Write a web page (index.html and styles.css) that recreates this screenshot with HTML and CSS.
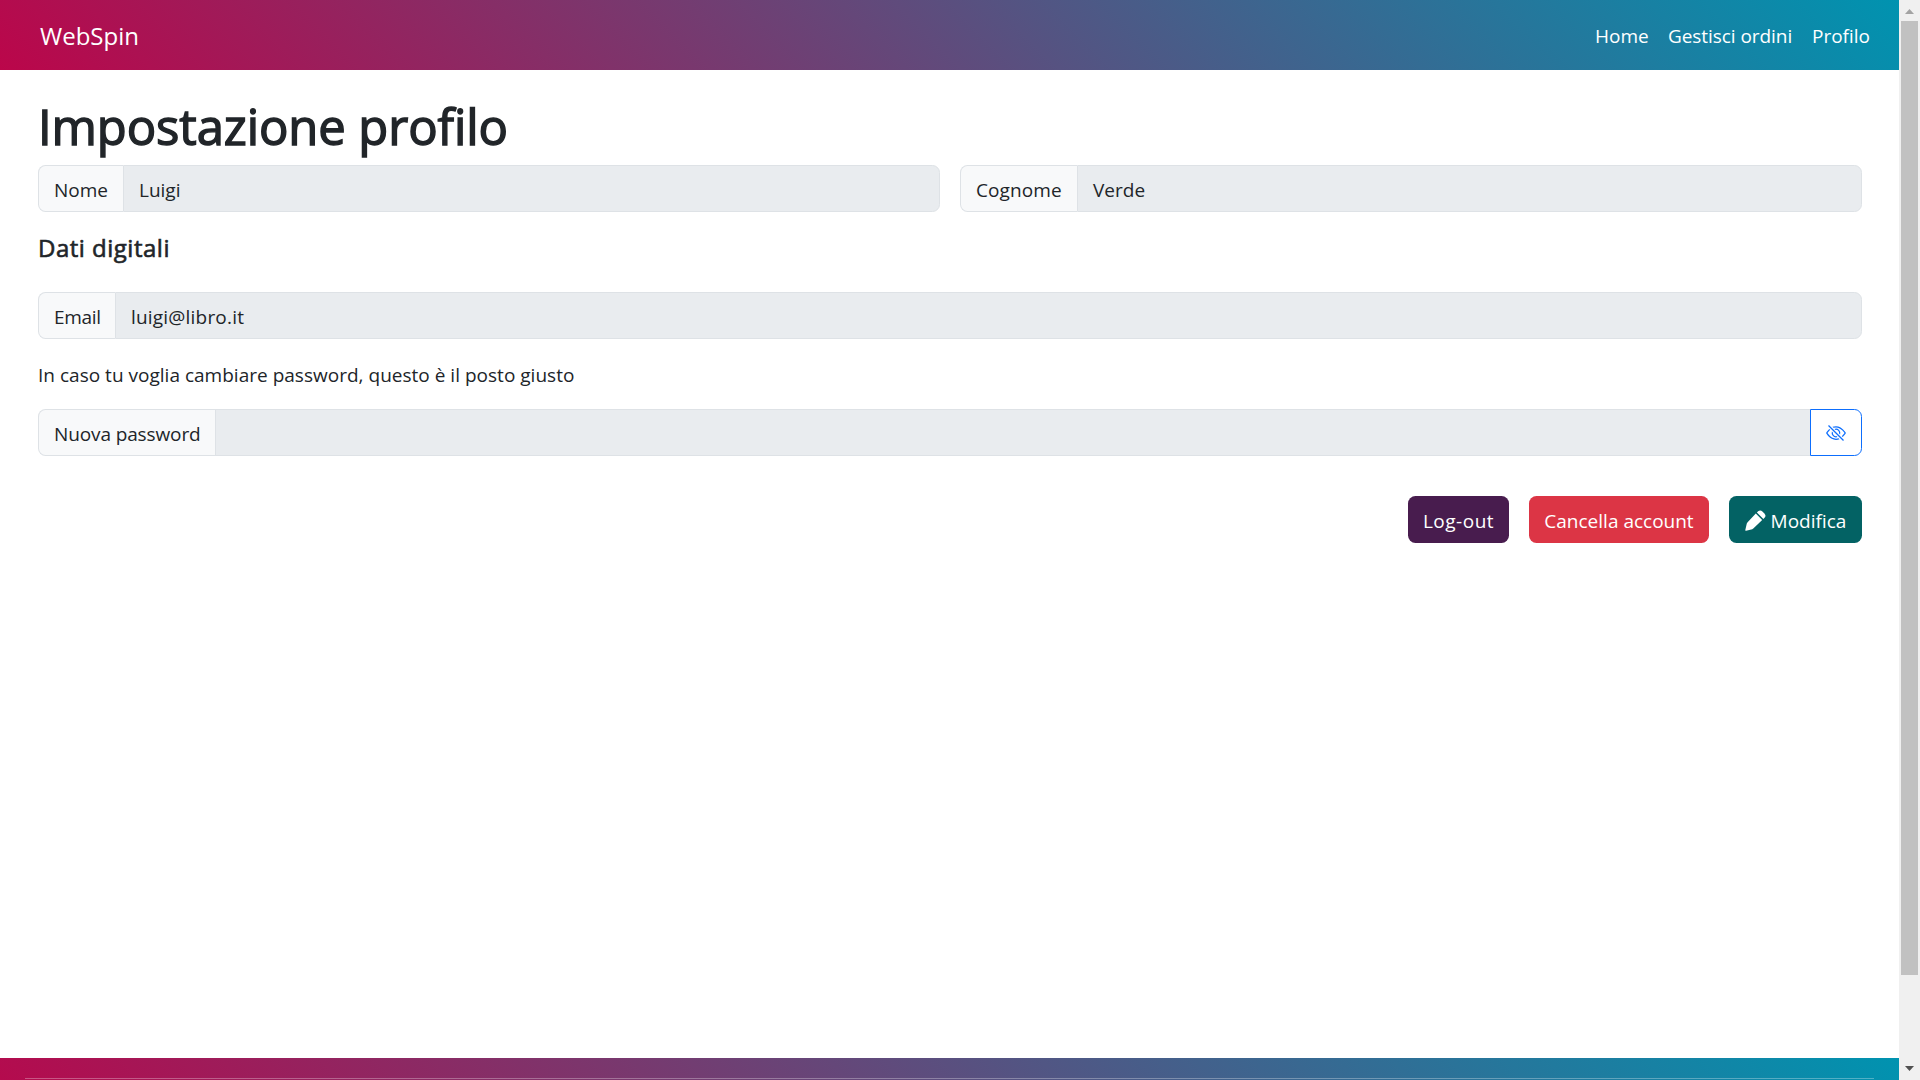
FILE: index.html
```html
<!DOCTYPE html>
<html lang="it">
<head>
<meta charset="utf-8">
<title>WebSpin</title>
<link rel="stylesheet" href="styles.css">
</head>
<body>
<div class="page">
  <nav class="navbar">
    <a class="brand">WebSpin</a>
    <div class="links">
      <a class="link-home">Home</a>
      <a class="link-orders">Gestisci ordini</a>
      <a class="link-profile">Profilo</a>
    </div>
  </nav>
  <main class="content">
    <h1>Impostazione profilo</h1>
    <div class="names">
      <div class="field"><span class="label label-name">Nome</span><span class="value">Luigi</span></div>
      <div class="field"><span class="label label-surname">Cognome</span><span class="value">Verde</span></div>
    </div>
    <h2>Dati digitali</h2>
    <div class="field"><span class="label label-email">Email</span><span class="value value-email">luigi@libro.it</span></div>
    <p class="hint">In caso tu voglia cambiare password, questo è il posto giusto</p>
    <div class="field">
      <span class="label label-password">Nuova password</span><span class="value value-joined"></span>
      <button class="reveal" aria-label="Mostra password">
        <svg width="20" height="20" viewBox="0 0 16 16" fill="currentColor"><path d="M13.359 11.238C15.06 9.72 16 8 16 8s-3-5.5-8-5.5a7.028 7.028 0 0 0-2.79.588l.77.771A5.944 5.944 0 0 1 8 3.5c2.12 0 3.879 1.168 5.168 2.457A13.134 13.134 0 0 1 14.828 8c-.058.087-.122.183-.195.288-.335.48-.83 1.12-1.465 1.755-.165.165-.337.328-.517.486l.708.709z"/><path d="M11.297 9.176a3.5 3.5 0 0 0-4.474-4.474l.823.823a2.5 2.5 0 0 1 2.829 2.829l.822.822zm-2.943 1.299.822.822a3.5 3.5 0 0 1-4.474-4.474l.823.823a2.5 2.5 0 0 0 2.829 2.829z"/><path d="M3.35 5.47c-.18.16-.353.322-.518.487A13.134 13.134 0 0 0 1.172 8l.195.288c.335.48.83 1.12 1.465 1.755C4.121 11.332 5.881 12.5 8 12.5c.716 0 1.39-.133 2.02-.36l.77.772A7.029 7.029 0 0 1 8 13.5C3 13.5 0 8 0 8s.939-1.721 2.641-3.238l.708.709zm10.296 8.884-12-12 .708-.708 12 12-.708.708z"/></svg>
      </button>
    </div>
    <div class="actions">
      <button class="btn btn-logout">Log-out</button>
      <button class="btn btn-delete">Cancella account</button>
      <button class="btn btn-edit">
        <svg width="21" height="21" viewBox="0 0 21 21" fill="currentColor"><path d="M10.8 3.5 17.2 9.9 8.3 18.6Q7.9 19 7.3 19.2L1 20.8Q.1 21 .3 20L1.8 13.6Q2 12.8 2.6 12.2Z"/><path d="M11.9 2.4 13.1 1.3Q15.3-.4 17.4 1.4L19.4 3.4Q21.4 5.6 19.7 7.6L18.4 8.9Z"/></svg>
        <span>Modifica</span>
      </button>
    </div>
  </main>
  <footer class="footer"><div class="rule"></div></footer>
</div>
<div class="scrollbar">
  <svg class="arrow-up" width="9" height="5" viewBox="0 0 9 5"><path d="M4.5 0 9 5H0Z"/></svg>
  <div class="thumb"></div>
  <svg class="arrow-down" width="9" height="5" viewBox="0 0 9 5"><path d="M0 0H9L4.5 5Z"/></svg>
</div>
</body>
</html>
```
FILE: styles.css
```css
* { box-sizing: border-box; }
body {
  margin: 0;
  height: 1080px;
  display: flex;
  overflow: hidden;
  background: #fff;
  color: #212529;
  font-family: "Open Sans", "Noto Sans", sans-serif;
  font-size: 19px;
  line-height: 30px;
}
.page { width: 1899px; display: flex; flex-direction: column; }
.navbar, .footer { background: linear-gradient(45deg, #bb064a, #0093b0); }
.navbar {
  height: 70px;
  padding: 2px 29px 0 40px;
  display: flex;
  align-items: center;
  justify-content: space-between;
  color: #fff;
}
.brand { font-size: 24px; }
.links { display: flex; gap: 20px; white-space: nowrap; }
.link-home { width: 53px; }
.link-orders { width: 124px; letter-spacing: -0.06px; }
.link-profile { width: 58px; }

.content { flex: 1; padding: 25px 37px 0 38px; }
h1 {
  margin: 0 0 10px;
  padding-top: 1px;
  height: 60px;
  font-size: 49px;
  font-weight: 400;
  line-height: 60px;
  letter-spacing: -0.1px;
  -webkit-text-stroke: 1.4px #212529;
}
h2 {
  margin: 20px 0 30px;
  padding-top: 1px;
  height: 30px;
  font-size: 24px;
  font-weight: 400;
  line-height: 30px;
  letter-spacing: 0.5px;
  -webkit-text-stroke: 0.6px #212529;
}
.names { display: grid; grid-template-columns: 1fr 1fr; gap: 20px; }
.field { display: flex; height: 47px; }
.label, .value { border: 1px solid #dee2e6; padding: 9px 15px 6px; white-space: nowrap; }
.label { background: #f8f9fa; border-radius: 7.5px 0 0 7.5px; border-right: 0; }
.value { flex: 1; background: #e9ecef; border-radius: 0 7.5px 7.5px 0; }
.value-joined { border-radius: 0; border-right: 0; }
.value-email { letter-spacing: 0.2px; }
.label-name { width: 85px; }
.label-surname { width: 117px; letter-spacing: 0.1px; }
.label-email { width: 77px; letter-spacing: -0.3px; }
.label-password { width: 177px; letter-spacing: -0.12px; }
.hint { margin: 20px 0; padding-top: 1px; height: 30px; letter-spacing: 0.015px; }
.reveal {
  width: 52px;
  padding: 0;
  display: flex;
  align-items: center;
  justify-content: center;
  color: #0d6efd;
  background: #fff;
  border: 1px solid #0d6efd;
  border-radius: 0 7.5px 7.5px 0;
}
.actions { margin-top: 40px; display: flex; justify-content: flex-end; gap: 20px; }
.btn {
  height: 47px;
  padding: 3px 0 0;
  border: 0;
  border-radius: 7.5px;
  display: flex;
  align-items: center;
  justify-content: center;
  color: #fff;
  font: inherit;
  white-space: nowrap;
}
.btn-logout { width: 101px; background: #481c4e; letter-spacing: 0.5px; }
.btn-delete { width: 180px; background: #dc3545; }
.btn-edit { width: 133px; background: #036264; gap: 5px; }
.btn-edit svg { margin-top: -2px; }

.footer { height: 22px; padding: 20px 25px 0; background-size: 100% 90px; }
.rule { height: 1px; background: rgba(255, 255, 255, 0.3); }

.scrollbar {
  width: 21px;
  padding: 9px 2px;
  display: flex;
  flex-direction: column;
  align-items: center;
  background: #f0f0f0;
}
.thumb { width: 17px; height: 954px; margin-top: 7px; background: #c1c1c1; }
.arrow-up { fill: #a3a3a3; }
.arrow-down { margin-top: auto; fill: #505050; }
```
